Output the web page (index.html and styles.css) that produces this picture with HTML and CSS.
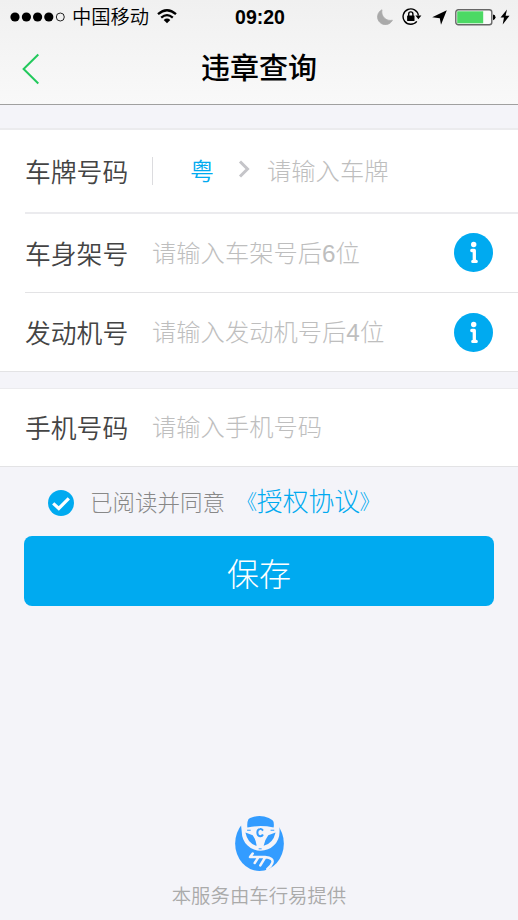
FILE: index.html
```html
<!DOCTYPE html>
<html lang="zh-CN">
<head>
<meta charset="utf-8">
<title>违章查询</title>
<link rel="stylesheet" href="styles.css">
</head>
<body>
<header class="top">
  <div class="status">
    <div class="status-left">
      <svg class="signal" viewBox="0 0 56 12"><circle cx="5" cy="6" r="4.6"/><circle cx="16.4" cy="6" r="4.6"/><circle cx="27.6" cy="6" r="4.6"/><circle cx="38.8" cy="6" r="4.6"/><circle cx="50.3" cy="6" r="4" fill="none" stroke="#222" stroke-width="1"/></svg>
      <span class="carrier">中国移动</span>
      <svg class="wifi" viewBox="0 0 20 15"><path d="M1 5.2Q10-2.8 19 5.2M4.2 8.6Q10 3.6 15.8 8.6" fill="none" stroke="#000" stroke-width="2.3"/><path d="M6.7 11Q10 8.2 13.3 11L10 14.3Z"/></svg>
    </div>
    <span class="clock">09:20</span>
    <div class="status-right">
      <svg class="moon" viewBox="0 0 16 16"><path d="M5 .8A7.8 7.8 0 1 0 15.4 11.2 8.6 8.6 0 0 1 5 .8Z" fill="#aaa" stroke="#aaa" stroke-width=".8"/></svg>
      <svg class="lock" viewBox="0 0 20 18"><path d="M14.8 13.4A7.7 7.7 0 1 1 16.4 7.5" fill="none" stroke="#000" stroke-width="1.4"/><path d="M13.4 7.4h6l-3 3.8Z"/><rect x="5.1" y="7.5" width="7.4" height="5.6" rx=".5"/><path d="M6.7 8V6a2.1 2.1 0 0 1 4.2 0v2" fill="none" stroke="#000" stroke-width="1.4"/></svg>
      <svg class="arrow" viewBox="0 0 15 15"><path d="M14.8.2 9 14.8 7.8 8.2.2 7.2Z"/></svg>
      <svg class="battery" viewBox="0 0 41 17"><rect x=".8" y=".8" width="36" height="15" rx="2.5" fill="#fafafa" stroke="#666" stroke-width="1.4"/><rect x="2.2" y="2.3" width="26" height="12" fill="#4cd964"/><path d="M38 5.5q2.5.3 2.5 2.8T38 11.3Z"/></svg>
      <svg class="bolt" viewBox="0 0 10 16"><path d="M7 .5.5 8.5H4L2.7 15.5 9.5 6.7H5.6Z"/></svg>
    </div>
  </div>
  <div class="nav">
    <svg class="back" viewBox="0 0 18 32"><path d="M16.3 1.5 1.6 16 16.3 30.5" fill="none" stroke="#22c95c" stroke-width="2"/></svg>
    <h1 class="title">违章查询</h1>
  </div>
</header>

<main>
  <section class="card">
    <div class="row plate">
      <span class="label">车牌号码</span>
      <span class="divider"></span>
      <span class="province">粤</span>
      <svg class="chevron" viewBox="0 0 12 18"><path d="M2 1.5 9.5 9 2 16.5" fill="none" stroke="#c5c5c9" stroke-width="3"/></svg>
      <span class="hint">请输入车牌</span>
    </div>
    <div class="row">
      <span class="label">车身架号</span>
      <span class="hint">请输入车架号后6位</span>
      <svg class="info" viewBox="0 0 39 39"><circle cx="19.5" cy="19.5" r="19.5" fill="#00aaf0"/><circle cx="19.7" cy="11.5" r="2.7" fill="#fff"/><path d="M17.8 17.5h2.5V28.4M18.8 28.4h3.4" fill="none" stroke="#fff" stroke-width="3.3" stroke-linecap="round" stroke-linejoin="round"/></svg>
    </div>
    <div class="row">
      <span class="label">发动机号</span>
      <span class="hint">请输入发动机号后4位</span>
      <svg class="info" viewBox="0 0 39 39"><circle cx="19.5" cy="19.5" r="19.5" fill="#00aaf0"/><circle cx="19.7" cy="11.5" r="2.7" fill="#fff"/><path d="M17.8 17.5h2.5V28.4M18.8 28.4h3.4" fill="none" stroke="#fff" stroke-width="3.3" stroke-linecap="round" stroke-linejoin="round"/></svg>
    </div>
  </section>
  <section class="card phone">
    <div class="row">
      <span class="label">手机号码</span>
      <span class="hint">请输入手机号码</span>
    </div>
  </section>
  <div class="agree">
    <svg class="check" viewBox="0 0 26 26"><circle cx="13" cy="13" r="13" fill="#00aaf0"/><path d="M5.2 13.3 10.8 18.5 20.8 8.4" fill="none" stroke="#fff" stroke-width="3.2"/></svg>
    <span class="agree-text">已阅读并同意</span>
    <a class="link"><span class="open">《</span>授权协议<span class="close">》</span></a>
  </div>
  <button class="save">保存</button>
</main>

<footer class="footer">
  <svg class="logo" viewBox="222 48 147 166">
    <ellipse cx="295.5" cy="131" rx="73.5" ry="83" fill="#339cff"/>
    <path d="M236 40H262V58Q257 68 259 83Q298 74 338 83Q341 68 334 58V40H356V96A57 57 0 0 1 242 96Z" fill="#f4f4f9"/>
    <path d="M253 98 275 106Q285 120 287 138Q260 132 253 98ZM344 98 322 106Q311 120 308 138Q336 132 344 98Z" fill="#339cff"/>
    <path d="M258 91h11M329 91h11M293 147h9" stroke="#339cff" stroke-width="3"/>
    <path d="M306 92Q302 86 297 87Q289 88 289 98T297 109Q303 110 306 104" fill="none" stroke="#339cff" stroke-width="6"/>
    <path d="M275 161 267 172H312Q340 175 334 190Q330 201 319 208M292 173 281 190M312 174 298 197" fill="none" stroke="#f4f4f9" stroke-width="7.5" stroke-linecap="round" stroke-linejoin="round"/>
  </svg>
  <p class="provider">本服务由车行易提供</p>
</footer>
</body>
</html>
```
FILE: styles.css
```css
* { box-sizing: border-box; }
body {
  margin: 0;
  height: 920px;
  display: flex;
  flex-direction: column;
  background: #f4f4f9;
  font-family: "Liberation Sans", "Noto Sans CJK SC", sans-serif;
  font-weight: 350;
  overflow: hidden;
  white-space: nowrap;
}
svg { display: block; flex: none; }
.top {
  height: 105px;
  background: linear-gradient(#f0f0f0, #f9f9f9);
  border-bottom: 1px solid #a0a0a0;
}
.status {
  height: 34px;
  display: grid;
  grid-template-columns: 1fr auto 1fr;
  align-items: center;
  padding: 0 8px 0 10px;
}
.status-left, .status-right { display: flex; align-items: center; }
.status-right { justify-content: flex-end; }
.signal { width: 56px; height: 12px; }
.carrier { margin: 2px 0 0 6px; font-size: 19.3px; line-height: 30px; }
.wifi { width: 20px; height: 15px; margin: -2px 0 0 8px; }
.clock { font-size: 19.5px; font-weight: 700; line-height: 34px; }
.moon { width: 16px; height: 16px; margin-right: 9px; }
.lock { width: 20px; height: 18px; margin-right: 10px; }
.arrow { width: 15px; height: 15px; margin-right: 8px; }
.battery { width: 41px; height: 17px; margin-right: 4px; }
.bolt { width: 10px; height: 16px; }
.nav {
  height: 70px;
  display: grid;
  grid-template-columns: 1fr auto 1fr;
  align-items: center;
  padding: 0 22px;
}
.back { width: 18px; height: 32px; }
.title { margin: 0; font-size: 29px; font-weight: 500; line-height: 70px; }
.card {
  margin-top: 23px;
  padding-left: 25px;
  background: #fff;
  border-top: 2px solid #ebebee;
  border-bottom: 1px solid #e3e3e5;
}
.row {
  height: 79px;
  display: flex;
  align-items: center;
  padding-right: 25px;
  border-bottom: 1px solid #e3e3e5;
}
.row:last-child { height: 78px; border-bottom: 0; }
.row.plate { height: 84px; border-bottom: 2px solid #ebebee; }
.label { width: 127px; margin-top: -2px; font-size: 25.8px; color: #444; }
.hint { margin-top: -4px; font-size: 24.3px; font-weight: 300; color: #bebebe; }
.info { width: 39px; height: 39px; margin: -1px 0 0 auto; }
.row:last-child .info { margin-top: 0; }
.divider { width: 1px; height: 28px; background: #dcdcdf; }
.province { margin: -3px 0 0 37px; font-size: 24px; color: #00aaf0; }
.chevron { width: 12px; height: 18px; margin: -4px 17px 0 24px; }
.phone { margin-top: 16px; border-top-width: 1px; }
.phone .row:last-child { height: 77px; }
.agree {
  height: 69px;
  display: flex;
  align-items: center;
  padding: 2px 0 0 48px;
}
.check { width: 26px; height: 26px; }
.agree-text { margin: -4px 0 0 16px; font-size: 22.5px; font-weight: 300; color: #888; }
.link { margin: -7px 0 0 6px; font-size: 25.8px; font-weight: 300; color: #00aaf0; }
.open, .close { display: inline-block; }
.open { transform: translateX(3px) scale(.8, .8); }
.close { transform: translateX(-3px) scale(.8, .8); }
.save {
  display: block;
  width: 470px;
  height: 70px;
  margin: 0 0 0 24px;
  padding: 1px 0 0;
  border: 0;
  border-radius: 8px;
  background: #00aaf0;
  color: #fff;
  font: inherit;
  font-size: 32px;
  font-weight: 300;
}
.footer {
  margin-top: auto;
  padding-bottom: 9px;
  display: flex;
  flex-direction: column;
  align-items: center;
}
.logo { width: 49px; height: 55px; }
.provider { margin: 10px 0 0; font-size: 19.4px; line-height: 30px; color: #aaa; }
```
